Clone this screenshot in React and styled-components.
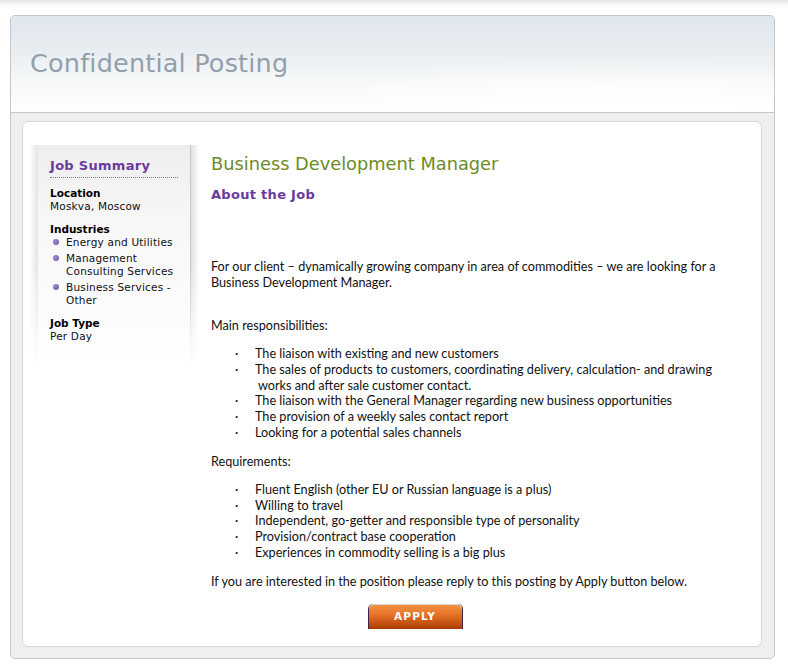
import React from 'react';
import styled, { createGlobalStyle } from 'styled-components';

const GlobalStyle = createGlobalStyle`
  body {
    margin: 0;
    background: #ffffff;
    font-family: "DejaVu Sans", Verdana, sans-serif;
  }
`;

// --- LAYOUT ---

const Page = styled.div`
  padding: 15px 13px 8px 10px;
  background: linear-gradient(to bottom, #e4e4e4 0px, #f6f6f6 4px, #ffffff 9px);
`;

const Frame = styled.div`
  border: 1px solid #c6c6c6;
  border-radius: 5px;
  background: #efefef;
  overflow: hidden;
`;

const Header = styled.div`
  height: 96px;
  display: flex;
  align-items: center;
  padding-left: 19px;
  border-bottom: 1px solid #c8c8c8;
  background:
    radial-gradient(ellipse 420px 70px at 78% 95%, rgba(255, 255, 255, 0.9), rgba(255, 255, 255, 0) 70%),
    linear-gradient(to bottom, #dfe6ec 0%, #e8edf1 35%, #f7f9fa 70%, #ffffff 100%);
`;

const Title = styled.h1`
  margin: 0 0 2px 0;
  font-size: 25.5px;
  font-weight: normal;
  color: #929fad;
  letter-spacing: 0.2px;
`;

const Body = styled.div`
  padding: 8px 12px 11px 11px;
`;

const Card = styled.div`
  background: #ffffff;
  border: 1px solid #d6d6d6;
  border-radius: 6px;
  height: 526px;
  display: flex;
  align-items: flex-start;
  padding: 23px 0 0 15px;
  box-sizing: border-box;
`;

// --- SIDEBAR ---

const Sidebar = styled.div`
  position: relative;
  width: 152px;
  flex-shrink: 0;
  box-sizing: border-box;
  padding: 13px 12px 13px 12px;
  background: linear-gradient(to bottom, #eeeeee 0%, #f6f6f6 30%, #ffffff 100%);

  &::before,
  &::after {
    content: '';
    position: absolute;
    top: 0;
    bottom: 0;
    width: 9px;
    -webkit-mask-image: linear-gradient(to bottom, #000 0%, #000 55%, transparent 100%);
    mask-image: linear-gradient(to bottom, #000 0%, #000 55%, transparent 100%);
  }

  &::before {
    left: -9px;
    background: linear-gradient(to right, rgba(0, 0, 0, 0), rgba(0, 0, 0, 0.1));
  }

  &::after {
    right: -9px;
    background: linear-gradient(to right, #c8c8c8 0px, #c8c8c8 1px, rgba(0, 0, 0, 0.12) 1px, rgba(0, 0, 0, 0) 9px);
  }
`;

const SideTitle = styled.div`
  font-size: 13px;
  font-weight: bold;
  color: #6a3a9c;
  padding-bottom: 4px;
  border-bottom: 1px dotted #7a7a7a;
  margin-bottom: 9px;
  letter-spacing: 0.3px;
`;

const Label = styled.div`
  font-size: 10.5px;
  font-weight: bold;
  color: #000000;
  line-height: 13px;
`;

const Value = styled.div`
  font-size: 10.5px;
  color: #111111;
  line-height: 13px;
  letter-spacing: 0.2px;
  margin-bottom: 10px;
`;

const BulletList = styled.ul`
  list-style: none;
  margin: 0 0 10px 0;
  padding: 0;
`;

const BulletItem = styled.li`
  position: relative;
  padding-left: 16px;
  font-size: 10.5px;
  line-height: 13px;
  letter-spacing: 0.2px;
  color: #111111;
  margin-bottom: 3px;

  &::before {
    content: '';
    position: absolute;
    left: 3px;
    top: 3px;
    width: 6px;
    height: 6px;
    border-radius: 50%;
    background: radial-gradient(circle at 35% 35%, #a08ad0, #6a4fa8);
  }
`;

// --- MAIN CONTENT ---

const Main = styled.div`
  margin-left: 21px;
  padding-top: 8px;
  flex: 1;
  padding-right: 30px;
`;

const JobTitle = styled.h2`
  margin: 0;
  font-size: 17.8px;
  font-weight: normal;
  color: #6d8b27;
  line-height: 22px;
`;

const SubTitle = styled.h3`
  margin: 12px 0 0 0;
  font-size: 13px;
  font-weight: bold;
  color: #6a3a9c;
  letter-spacing: 0.3px;
  line-height: 16px;
`;

const Text = styled.div`
  font-family: Lato, "Open Sans", sans-serif;
  font-size: 12.65px;
  line-height: 16px;
  color: #111111;
  margin-top: ${p => p.$top || 0}px;
`;

const Items = styled.div`
  margin-top: ${p => p.$top || 0}px;
  font-family: Lato, "Open Sans", sans-serif;
  font-size: 12.65px;
  line-height: 15.8px;
  color: #111111;
`;

const Item = styled.div`
  display: flex;
  padding-left: 24px;
`;

const Dot = styled.span`
  width: 20px;
  flex-shrink: 0;
`;

const ButtonRow = styled.div`
  display: flex;
  justify-content: center;
  margin-top: 14px;
  padding-right: 112px;
`;

const ApplyButton = styled.button`
  width: 93px;
  height: 25px;
  border: none;
  border-radius: 5px 5px 0 0;
  background: linear-gradient(to bottom, #f39442 0%, #e6762a 40%, #c65312 75%, #a83c04 100%);
  box-shadow: inset 0 1px 0 #d9d9d9, 1px 0 0 #3a2540, -1px 0 0 #3a2540;
  color: #ffffff;
  font-family: "DejaVu Sans", Verdana, sans-serif;
  font-size: 10.5px;
  font-weight: bold;
  letter-spacing: 1.2px;
  cursor: pointer;
  padding: 0;
`;

const responsibilities = [
  'The liaison with existing and new customers',
  'The sales of products to customers, coordinating delivery, calculation- and drawing',
  'The liaison with the General Manager regarding new business opportunities',
  'The provision of a weekly sales contact report',
  'Looking for a potential sales channels',
];

const requirements = [
  'Fluent English (other EU or Russian language is a plus)',
  'Willing to travel',
  'Independent, go-getter and responsible type of personality',
  'Provision/contract base cooperation',
  'Experiences in commodity selling is a big plus',
];

const App = () => {
  return (
    <>
      <GlobalStyle />
      <Page>
        <Frame>
          <Header>
            <Title>Confidential Posting</Title>
          </Header>
          <Body>
            <Card>
              <Sidebar>
                <SideTitle>Job Summary</SideTitle>
                <Label>Location</Label>
                <Value>Moskva, Moscow</Value>
                <Label>Industries</Label>
                <BulletList>
                  <BulletItem>Energy and Utilities</BulletItem>
                  <BulletItem>Management Consulting Services</BulletItem>
                  <BulletItem>Business Services - Other</BulletItem>
                </BulletList>
                <Label>Job Type</Label>
                <Value>Per Day</Value>
              </Sidebar>
              <Main>
                <JobTitle>Business Development Manager</JobTitle>
                <SubTitle>About the Job</SubTitle>
                <Text $top={56}>
                  For our client – dynamically growing company in area of commodities – we are looking for a
                  Business Development Manager.
                </Text>
                <Text $top={27}>Main responsibilities:</Text>
                <Items $top={12}>
                  {responsibilities.map((r, i) => (
                    <React.Fragment key={i}>
                      <Item>
                        <Dot>·</Dot>
                        <span>{r}</span>
                      </Item>
                      {i === 1 && (
                        <Item>
                          <Dot />
                          <span>&nbsp;works and after sale customer contact.</span>
                        </Item>
                      )}
                    </React.Fragment>
                  ))}
                </Items>
                <Text $top={13}>Requirements:</Text>
                <Items $top={12}>
                  {requirements.map((r, i) => (
                    <Item key={i}>
                      <Dot>·</Dot>
                      <span>{r}</span>
                    </Item>
                  ))}
                </Items>
                <Text $top={13}>
                  If you are interested in the position please reply to this posting by Apply button below.
                </Text>
                <ButtonRow>
                  <ApplyButton>APPLY</ApplyButton>
                </ButtonRow>
              </Main>
            </Card>
          </Body>
        </Frame>
      </Page>
    </>
  );
};

export default App;
